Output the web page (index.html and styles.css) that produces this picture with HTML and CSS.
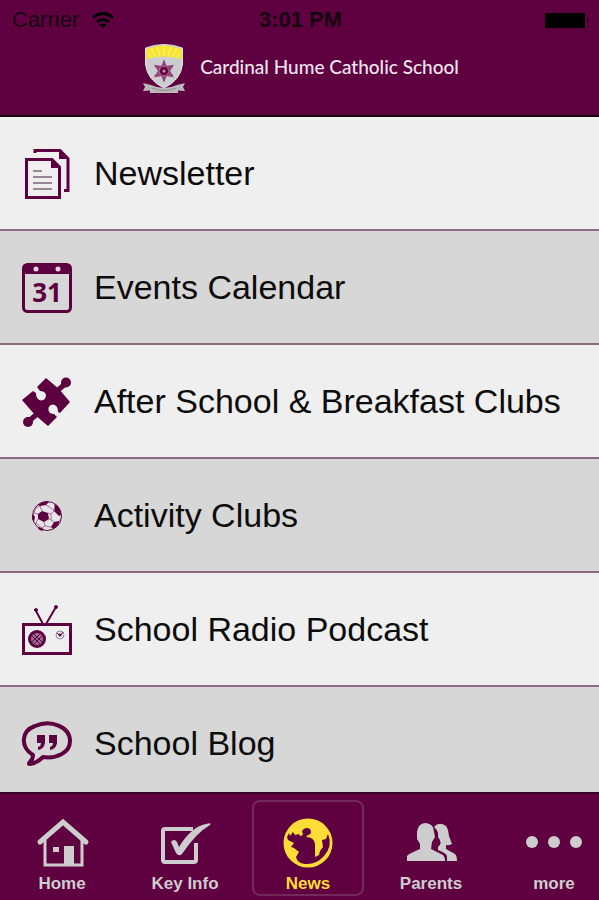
FILE: index.html
```html
<!DOCTYPE html>
<html lang="en">

<head>
    <meta charset="utf-8">
    <meta name="viewport" content="width=device-width, initial-scale=1">
    <title>Cardinal Hume Catholic School</title>
    <link rel="stylesheet" href="styles.css">
</head>

<body>
    <header class="header">
        <div class="status">
            <div class="carrier">
                <span>Carrier</span>
                <svg width="24" height="18" viewBox="0 0 24 18" fill="none" stroke="#000" stroke-width="3">
                    <path d="M2 6.5Q12-1.500 22 6.500" />
                    <path d="M6 11Q12 6 18 11" />
                    <path d="M12 17L8.500 13.500Q12 11 15.500 13.500Z" fill="#000" stroke="none" />
                </svg>
            </div>
            <div class="time">3:01 PM</div>
            <div class="battery">
                <svg width="44" height="15" viewBox="0 0 44 15">
                    <rect width="40" height="15" rx="1" />
                    <path d="M42 5q2.500 2.500 0 5z" />
                </svg>
            </div>
        </div>
        <div class="brand">
            <svg width="44" height="50" viewBox="0 0 44 50">
                <path d="M1 39L9 41Q22 47 35 41L43 39L41 43L43 47L36 46.500V49H8V46.500L1 47L3 43Z" fill="#bcb9bd" />
                <path d="M10 44Q22 49 34 44" fill="none" stroke="#918a92" />
                <path d="M3.500 4Q22-3 40.500 4V20Q39 36 22 44Q5 36 3.500 20Z" fill="#cccdd0" stroke="#e4dfe2" />
                <path d="M4.500 5Q22-2 39.500 5V15Q22 10 4.500 15Z" fill="#f8e52d" />
                <path d="M22 12V2M18 12L15 3M26 12L29 3M14 13L9 4M30 13L35 4M10 14L5 9M34 14L39 9" stroke="#fff39a" />
                <g fill="none" stroke="#954477" stroke-width="2">
                    <path d="M22 18L24 23L30 22L27 27L30 32L24 31L22 36L20 31L14 32L17 27L14 22L20 23Z" fill="#b57b9f" />
                    <path d="M22 17V37M13 22L31 32M13 32L31 22" stroke-dasharray="2 1" />
                </g>
                <circle cx="22" cy="27" r="4" fill="#62003f" />
                <circle cx="22" cy="27" r="1.500" fill="#c79bb5" />
            </svg>
            <h1>Cardinal Hume Catholic School</h1>
        </div>
    </header>

    <main class="list">
        <a class="item" href="#newsletter">
            <svg width="50" height="50" viewBox="0 0 50 50" fill="none" stroke="#5d0040" stroke-width="3">
                <path d="M13 4V1.500H38L46 9.500V41.500H42" />
                <path d="M37 1V10H47Z" fill="#5d0040" stroke="none" />
                <path d="M4.500 10.500H30L37.500 18V48.500H4.500Z" />
                <path d="M29 10V19H38Z" fill="#5d0040" stroke="none" />
                <path d="M11 22H20M11 28H30M11 34H30M11 40H30" stroke="#9b8695" stroke-width="2" />
            </svg>
            <span>Newsletter</span>
        </a>
        <a class="item" href="#events">
            <svg width="50" height="50" viewBox="0 0 50 50">
                <rect x="1.500" y="1.500" width="47" height="47" rx="4" fill="none" stroke="#5d0040" stroke-width="3" />
                <path d="M1 11V4Q1 1 4 1H46Q49 1 49 4V11Z" fill="#5d0040" />
                <circle cx="14" cy="6" r="2.500" fill="#e8d5e1" />
                <circle cx="36" cy="6" r="2.500" fill="#e8d5e1" />
                <text class="day" x="25" y="39">31</text>
            </svg>
            <span>Events Calendar</span>
        </a>
        <a class="item" href="#after-school">
            <svg width="50" height="50" viewBox="0 0 50 50" fill="#5d0040">
                <path d="M0 23L11 14L14 16Q14 23 19 23.500Q24 23 24 18Q23 14 18 14L15 10L24 1L37 12L48 25L38 36L36 35Q36 28 31 27.500Q26 28 26.500 33Q27 37 32 37L35 40L26 49L13 38Z" />
                <path d="M35 14L43 7M15 37L7 44" stroke="#5d0040" stroke-width="5" />
                <circle cx="44" cy="5.500" r="5" />
                <circle cx="6" cy="45" r="5" />
            </svg>
            <span>After School &amp; Breakfast Clubs</span>
        </a>
        <a class="item" href="#activity">
            <svg width="50" height="50" viewBox="0 0 50 50">
                <circle cx="25" cy="25" r="14.500" fill="#e7e3e7" stroke="#5d0040" />
                <g fill="#5d0040">
                    <path d="M20 20L26 22L27 28L22 31L16 28L16 23Z" />
                    <path d="M16 14Q21 9 27 11L24 14L18 15Z" />
                    <path d="M32 12Q39 16 39 24L37 25L32 20Z" />
                    <path d="M38 28Q37 35 31 38L29 36L32 31L37 30Z" />
                    <path d="M11 23L13 26L12 31L10 28ZM17 36L22 38L20 40L16 38Z" />
                </g>
                <path d="M20 20L18 15M24 14L29 17L32 20L29 23L26 22M29 23V29L27 28M29 29L32 31M22 31L23 35L29 36M23 35L20 37L14 32L16 28M14 32L12 31M16 23L12 22L14 17L18 15M32 20L33 12" fill="none" stroke="#a3749a" />
            </svg>
            <span>Activity Clubs</span>
        </a>
        <a class="item" href="#podcast">
            <svg width="50" height="50" viewBox="0 0 50 50" fill="none" stroke="#5d0040" stroke-width="3">
                <rect x="1.500" y="19.500" width="47" height="29" />
                <path d="M21 19L14 6M24 19L34 2" stroke-width="2" />
                <circle cx="14" cy="5" r="1.500" fill="#5d0040" stroke-width="1" />
                <circle cx="34" cy="2" r="1.500" fill="#5d0040" stroke-width="1" />
                <circle cx="15" cy="34" r="7.500" fill="#9d6f92" />
                <path d="M10 31L18 39M12 29L20 37M10 37L18 29M12 39L20 31" stroke-width="1" />
                <circle cx="38" cy="30" r="4" stroke="#9d829a" stroke-width="1" />
                <path d="M35 28L38 31L41 27" stroke-width="1" />
                <circle cx="38" cy="30" r="1.500" fill="#5d0040" stroke="none" />
            </svg>
            <span>School Radio Podcast</span>
        </a>
        <a class="item" href="#blog">
            <svg width="50" height="50" viewBox="0 0 50 50">
                <path d="M11 36C-2 28-1 12 13 7C29 0 48 8 48 22C48 34 34 40 21 38Q15 44 8 45Q6 45 8 43Q11 40 11 36Z" fill="none" stroke="#5d0040" stroke-width="4" stroke-linejoin="round" />
                <path d="M15 16H23V24Q22 30 16 31V28Q19 27 19 24H15ZM27 16H35V24Q34 30 28 31V28Q31 27 31 24H27Z" fill="#5d0040" />
            </svg>
            <span>School Blog</span>
        </a>
    </main>

    <nav class="tabs">
        <a class="tab" href="#home">
            <svg width="56" height="50" viewBox="0 0 56 50" fill="none" stroke="#cdcdcd" stroke-width="3">
                <path d="M6 24L29 4L52 24" stroke-linecap="round" stroke-width="5" />
                <path d="M11 22V47H48V22" />
                <path d="M31 29H39V46H31Z" fill="#cdcdcd" stroke-width="2" />
                <path d="M19 29H25V34H19Z" fill="#cdcdcd" stroke="none" />
            </svg>
            <span>Home</span>
        </a>
        <a class="tab" href="#info">
            <svg width="56" height="50" viewBox="0 0 56 50">
                <path d="M36 11H8Q6 11 6 13V42Q6 44 8 44H37Q39 44 39 42V25" fill="none" stroke="#cdcdcd" stroke-width="4" />
                <path d="M14 24Q17 20 20 24L22 29Q34 9 49 6Q55 4 53 7Q39 15 25 36Q22 39 19 35Z" fill="#cdcdcd" />
            </svg>
            <span>Key Info</span>
        </a>
        <a class="tab active" href="#news">
            <svg width="56" height="50" viewBox="0 0 56 50">
                <circle cx="28" cy="25" r="24.500" fill="#ffdc36" />
                <path d="M7 19L9 15L10 18L13 14L15 17L19 16L20 18L23 17L22 13Q25 8 30 11Q33 16 28 17L26 19Q34 19 35 26V39L39 37L40 33L43 29L42 22L46 21L48 16Q53 28 44 38Q36 47 25 46Q17 45 16 39L19 34L14 30L11 29L14 25L8 22Z" fill="#5f0041" />
            </svg>
            <span>News</span>
        </a>
        <a class="tab" href="#parents">
            <svg width="56" height="50" viewBox="0 0 56 50" fill="#cdcdcd">
                <path d="M31 9Q36 3 43 8Q45 10 46 18L49 26Q45 28 43 27V31L52 36Q54 38 54 43H44V38Q43 35 35 32V29Q40 25 35 19Q36 13 31 9Z" />
                <path d="M14 14Q15 5 23 5Q31 6 31 14L32 19L29 24L28 31L40 37Q42 39 42 43H4V38Q5 36 17 31V26L14 21Z" />
            </svg>
            <span>Parents</span>
        </a>
        <a class="tab" href="#more">
            <svg width="56" height="50" viewBox="0 0 56 50" fill="#cdcdcd">
                <circle cx="6" cy="24" r="6" />
                <circle cx="28" cy="24" r="6" />
                <circle cx="50" cy="24" r="6" />
            </svg>
            <span>more</span>
        </a>
    </nav>
</body>

</html>
```
FILE: styles.css
```css
* {
    box-sizing: border-box;
}

body {
    margin: 0;
    height: 100vh;
    display: flex;
    flex-direction: column;
    overflow: hidden;
    background: #5f0041;
    font-family: "Liberation Sans", Arial, sans-serif;
}

a {
    color: inherit;
    text-decoration: none;
}

svg {
    display: block;
    flex: none;
    overflow: visible;
}

.header {
    padding-bottom: 18px;
    border-bottom: 2px solid #17000f;
}

.status {
    display: grid;
    grid-template-columns: 1fr auto 1fr;
    align-items: center;
    height: 40px;
    padding: 0 10px 0 12px;
    font-size: 22px;
    color: #16000f;
}

.carrier {
    display: flex;
    align-items: center;
    gap: 12px;
}

.time {
    font-weight: bold;
}

.battery {
    justify-self: end;
}

.brand {
    display: flex;
    align-items: center;
    justify-content: center;
    gap: 14px;
    height: 57px;
    padding-left: 2px;
}

.brand h1 {
    margin: 0;
    padding-bottom: 4px;
    font-family: Lato, sans-serif;
    font-size: 19px;
    font-weight: 500;
    line-height: 24px;
    color: #f2e6ee;
}

.list {
    flex: 1;
    min-height: 0;
    overflow: hidden;
}

.item {
    display: flex;
    align-items: center;
    gap: 22px;
    height: 114px;
    padding: 2px 22px 0;
    border-bottom: 2px solid #8e6a80;
    background: #efefef;
    font-size: 34px;
    color: #0c0c0c;
    white-space: nowrap;
}

.item:nth-child(even) {
    background: #d7d7d7;
}

.item span {
    padding-bottom: 2px;
}

.day {
    font-family: "Open Sans", sans-serif;
    font-size: 26px;
    font-weight: bold;
    text-anchor: middle;
    fill: #5d0040;
}

/* the last tab runs a little past the right edge */
.tabs {
    display: flex;
    gap: 11px;
    margin-right: -11px;
    padding: 6px 0 4px 6px;
    border-top: 2px solid #3a0629;
}

.tab {
    flex: 1;
    display: flex;
    flex-direction: column;
    align-items: center;
    gap: 6px;
    height: 96px;
    padding-top: 16px;
    border: 2px solid transparent;
    border-radius: 8px;
    font-size: 17px;
    font-weight: bold;
    line-height: 20px;
    color: #cdcdcd;
}

.tab.active {
    border-color: #74295b;
    color: #ffdc36;
}
```
